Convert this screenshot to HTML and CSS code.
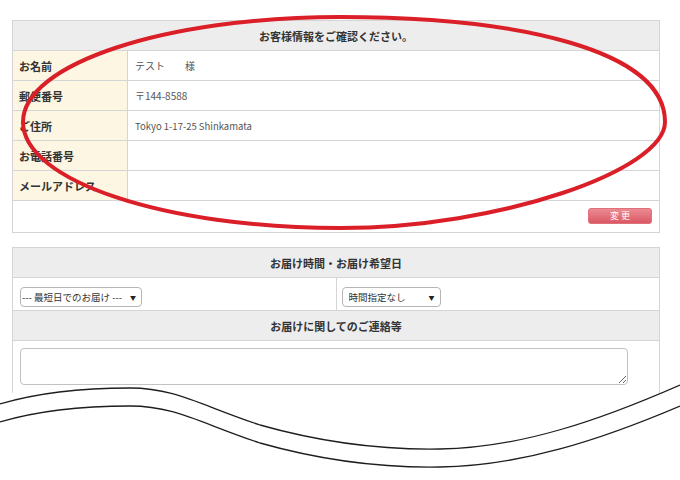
FILE: index.html
```html
<!DOCTYPE html>
<html lang="ja">
<head>
    <meta charset="UTF-8">
    <title>ご注文内容の確認</title>
    <link rel="stylesheet" href="styles.css">
</head>
<body>
    <div class="page">
        <table class="confirm">
            <colgroup><col class="col-label"><col></colgroup>
            <tr class="head"><th colspan="2">お客様情報をご確認ください。</th></tr>
            <tr><th class="label">お名前</th><td class="value">テスト　　様</td></tr>
            <tr><th class="label">郵便番号</th><td class="value">〒144-8588</td></tr>
            <tr><th class="label">ご住所</th><td class="value latin">Tokyo 1-17-25 Shinkamata</td></tr>
            <tr><th class="label">お電話番号</th><td class="value"></td></tr>
            <tr><th class="label">メールアドレス</th><td class="value"></td></tr>
            <tr class="actions"><td colspan="2"><button class="btn-change">変 更</button></td></tr>
        </table>

        <table class="delivery">
            <tr class="head"><th colspan="2">お届け時間・お届け希望日</th></tr>
            <tr class="selects">
                <td>
                    <span class="select-wrap wide">
                        <select><option>--- 最短日でのお届け ---</option></select>
                    </span>
                </td>
                <td>
                    <span class="select-wrap narrow">
                        <select><option>時間指定なし</option></select>
                    </span>
                </td>
            </tr>
            <tr class="head"><th colspan="2">お届けに関してのご連絡等</th></tr>
            <tr class="note"><td colspan="2"><textarea></textarea></td></tr>
        </table>
    </div>

    <!-- hand-drawn marks on top of the screenshot -->
    <svg class="marks" width="680" height="480" viewBox="0 0 680 480">
        <path d="M0 404 C40 392 90 388 130 388 C175 388 200 405 260 425 C320 442 380 450 440 449 C520 448 600 420 680 385 L680 480 L0 480 Z" fill="#fff"/>
        <path d="M0 404 C40 392 90 388 130 388 C175 388 200 405 260 425 C320 442 380 450 440 449 C520 448 600 420 680 385" fill="none" stroke="#1e1e1e" stroke-width="1.3"/>
        <path d="M0 422 C40 410 90 406 130 406 C175 406 200 423 260 443 C320 460 380 468 440 467 C520 466 600 440 680 406" fill="none" stroke="#1e1e1e" stroke-width="1.3"/>
        <path d="M340 17 C519 17 665 50 665 122 C665 170 500 228 340 228 C165 228 23 181 23 122 C23 64 165 17 340 17 Z" fill="none" stroke="#da1f28" stroke-width="4"/>
    </svg>
</body>
</html>
```

FILE: styles.css
```css
body {
    margin: 0;
    background: #fff;
    font-family: "Noto Sans CJK JP", "Noto Sans", sans-serif;
    color: #333;
}
.page {
    padding: 20px 0 0 12px;
    width: 648px;
    height: 373px;
    overflow: hidden;
}
table {
    width: 648px;
    border-collapse: collapse;
    table-layout: fixed;
}
th, td {
    border: 1px solid #d5d5d5;
    padding: 0;
}
.col-label {
    width: 115px;
}
.head th {
    height: 29px;
    background: #ededed;
    font-size: 11px;
    font-weight: bold;
    text-align: center;
}
.confirm tr {
    height: 30px;
}
.label {
    padding-left: 6px;
    background: #fcf6e3;
    font-size: 11px;
    font-weight: bold;
    text-align: left;
}
.value {
    padding-left: 7px;
    font-size: 10px;
    color: #555;
}
.latin {
    font-size: 9.5px;
}
.actions td {
    height: 23px;
    text-align: right;
    vertical-align: top;
    padding: 7px 7px 0 0;
}
.btn-change {
    display: inline-block;
    width: 64px;
    height: 16px;
    border: 1px solid #e0707a;
    border-radius: 3px;
    background: linear-gradient(#ec8b93, #da5864);
    color: #fff;
    font-family: inherit;
    font-size: 9px;
    line-height: 12px;
    padding: 0;
    vertical-align: top;
}
.delivery {
    margin-top: 14px;
}
.selects td {
    height: 32px;
    padding-left: 7px;
}
.selects td + td {
    padding-left: 5px;
}
.select-wrap {
    position: relative;
    display: inline-block;
}
.select-wrap::after {
    content: "▼";
    position: absolute;
    right: 6px;
    top: 6px;
    font-size: 6px;
    color: #222;
    pointer-events: none;
}
select {
    appearance: none;
    height: 20px;
    border: 1px solid #b5b5b5;
    border-radius: 4px;
    background: #fff;
    font-family: inherit;
    font-size: 9.5px;
    color: #333;
    padding: 0 0 0 1px;
    display: block;
}
.wide select {
    width: 122px;
}
.narrow select {
    width: 99px;
    padding-left: 6px;
}
.note td {
    height: 60px;
    padding: 7px 0 0 7px;
    vertical-align: top;
}
textarea {
    display: block;
    width: 608px;
    height: 37px;
    box-sizing: border-box;
    border: 1px solid #c2c2c2;
    border-radius: 4px;
    margin: 0;
}
.marks {
    position: absolute;
    top: 0;
    left: 0;
}
```
